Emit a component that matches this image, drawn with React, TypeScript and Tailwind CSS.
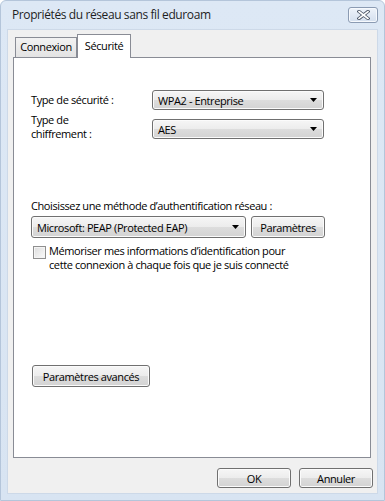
import type { ReactNode } from 'react'

const font = { fontFamily: '"Open Sans", "Noto Sans", sans-serif' }

const btnFace =
  'rounded-[3px] border border-[#707070] bg-[linear-gradient(#f6f6f6_0%,#ececec_50%,#dddddd_50%,#d3d3d3_100%)] shadow-[inset_0_0_0_1px_#fbfbfb] text-[11px] tracking-[-0.4px] text-black'

function Arrow() {
  return (
    <svg width="7" height="4" viewBox="0 0 7 4" className="shrink-0">
      <path d="M0 0h7L3.5 4z" fill="#000" />
    </svg>
  )
}

function Combo({ value, className }: { value: string; className: string }) {
  return (
    <div className={`${btnFace} flex items-center justify-between pl-[5px] pr-[6px] ${className}`}>
      <span className="leading-none">{value}</span>
      <Arrow />
    </div>
  )
}

function Button({ children, className }: { children: ReactNode; className: string }) {
  return (
    <div className={`${btnFace} flex items-center justify-center leading-none ${className}`}>
      {children}
    </div>
  )
}

function CloseButton() {
  return (
    <div className="w-[30px] h-[16px] rounded-[3px] border border-[#8b9bb3] bg-[linear-gradient(#eef3fa,#d4dfee)] shadow-[inset_0_0_0_1px_#f6f9fd] flex items-center justify-center">
      <svg width="13" height="10" viewBox="0 0 13 10">
        <path d="M2 1.5l9 7M11 1.5l-9 7" stroke="#4c5667" strokeWidth="3.4" strokeLinecap="square" />
        <path d="M2 1.5l9 7M11 1.5l-9 7" stroke="#ffffff" strokeWidth="1.6" strokeLinecap="square" />
      </svg>
    </div>
  )
}

export default function App() {
  return (
    <div
      className="w-[385px] h-[501px] flex flex-col bg-[linear-gradient(180deg,#dde8f5,#d8e4f2)] border border-[#b4c5da] rounded-t-[6px] overflow-hidden"
      style={font}
    >
      {/* Title bar */}
      <div className="h-[28px] shrink-0 flex items-center justify-between pl-[11px] pr-[6px]">
        <span className="text-[12px] tracking-[-0.4px] text-[#1e1e1e]">Propriétés du réseau sans fil eduroam</span>
        <CloseButton />
      </div>

      {/* Client area */}
      <div className="flex-1 mx-[6px] mb-[6px] bg-[#f0f0f0] border border-[#cdd9e8] flex flex-col px-[5px] pt-[4px] tracking-[-0.4px]">
        {/* Tabs */}
        <div className="h-[23px] flex items-end relative z-10">
          <div className="h-[20px] w-[62px] ml-[2px] border border-b-0 border-[#898c95] bg-[linear-gradient(#f2f2f2,#e3e3e3)] flex items-center justify-center text-[11px] text-black">
            Connexion
          </div>
          <div className="h-[24px] w-[54px] -mb-px border border-b-0 border-[#898c95] bg-white flex items-start justify-center pt-[3px] text-[11px] text-black">
            Sécurité
          </div>
        </div>

        {/* Panel */}
        <div className="h-[401px] mr-px border border-[#898c95] bg-white flex flex-col pl-[17px] text-[11px] text-black">
          <div className="mt-[32px] flex items-center h-[20px]">
            <span className="w-[121px]">Type de sécurité :</span>
            <Combo value="WPA2 - Entreprise" className="w-[172px] h-[20px]" />
          </div>
          <div className="mt-[7px] flex items-center">
            <span className="w-[121px] leading-[14px] -mt-[4px]">
              Type de
              <br />
              chiffrement :
            </span>
            <Combo value="AES" className="w-[172px] h-[20px]" />
          </div>

          <div className="mt-[59px] leading-none">Choisissez une méthode d’authentification réseau :</div>
          <div className="mt-[5px] flex items-center">
            <Combo value="Microsoft: PEAP (Protected EAP)" className="w-[215px] h-[22px]" />
            <Button className="ml-[5px] w-[74px] h-[22px]">Paramètres</Button>
          </div>
          <div className="mt-[6px] flex items-start">
            <div className="mt-[2px] ml-[2px] w-[13px] h-[13px] border border-[#8f8f8f] bg-[linear-gradient(135deg,#dcdcdc,#fbfbfb)] shadow-[inset_0_0_0_1px_#f4f4f4]" />
            <span className="ml-[3px] leading-[14px]">
              Mémoriser mes informations d’identification pour
              <br />
              cette connexion à chaque fois que je suis connecté
            </span>
          </div>

          <Button className="mt-[93px] ml-px w-[118px] h-[22px]">Paramètres avancés</Button>
        </div>

        {/* Bottom buttons */}
        <div className="flex justify-end gap-[8px] mt-[10px] mr-[-1px]">
          <Button className="w-[74px] h-[20px]">OK</Button>
          <Button className="w-[74px] h-[20px]">Annuler</Button>
        </div>
      </div>
    </div>
  )
}
